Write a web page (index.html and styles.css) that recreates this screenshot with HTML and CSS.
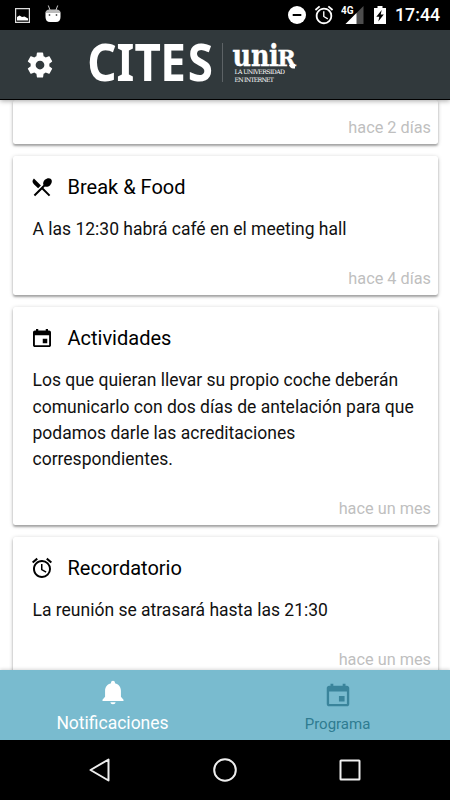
FILE: index.html
```html
<!DOCTYPE html>
<html lang="es">
<head>
<meta charset="utf-8">
<title>CITES - Notificaciones</title>
<meta name="viewport" content="width=device-width">
<link rel="stylesheet" href="styles.css">
</head>
<body>
<svg class="defs">
  <symbol id="calendar" viewBox="0 0 512 512"><path d="M368 272h-96v96h96v-96zM336 64v32H176V64h-48v32h-24c-22 0-40 18-40 40v272c0 22 18 40 40 40h304c22 0 40-18 40-40V136c0-22-18-40-40-40h-24V64h-48zm72 344H104V196h304v212z"/></symbol>
  <symbol id="alarm" viewBox="0 0 24 24"><path d="M22 5.720l-4.600-3.860-1.290 1.530 4.600 3.860L22 5.720zM7.880 3.390L6.600 1.860 2 5.710l1.290 1.530 4.590-3.850zM12.500 8H11v6l4.750 2.850.75-1.230-4-2.370V8zM12 4c-4.970 0-9 4.030-9 9s4.020 9 9 9a9 9 0 0 0 0-18zm0 16c-3.870 0-7-3.130-7-7s3.130-7 7-7 7 3.130 7 7-3.130 7-7 7z"/></symbol>
</svg>

<div class="status">
  <svg class="picture" viewBox="0 0 15 15"><path fill="none" stroke="#ddd" stroke-width="1.200" d="M.6.6h13.800v13.800H.6z"/><path d="M2 12.500V9l2.500-1.500L7 9l2.500-.5 3.500 2v2z"/></svg>
  <svg class="droid" viewBox="0 0 16 18"><path d="M.5 7.500h15V12c0 3-1.500 5-4.500 5H5c-3 0-4.500-2-4.500-5z"/><path fill="#bbb" d="M.5 8c0-2 1.500-3.500 4-3.500h7c2.500 0 4 1.500 4 3.500z"/><path fill="none" stroke="#ccc" d="M5 5L3.300.5M11 5L12.700.5"/><circle cx="4.500" cy="10" r=".9" fill="#555"/><circle cx="11.500" cy="10" r=".9" fill="#555"/></svg>
  <svg class="dnd" viewBox="0 0 18 18"><circle cx="9" cy="9" r="9"/><path fill="#000" d="M4.700 8h8.600v2H4.700z"/></svg>
  <svg class="alarm"><use href="#alarm"/></svg>
  <svg class="signal" viewBox="0 0 24 20"><path fill="#4d4d4d" d="M22.500 1v18h-18z"/><path d="M15.500 8v11h-11z"/><text x="0" y="9">4G</text></svg>
  <svg class="battery" viewBox="0 0 12 18"><path d="M3.500 0h5v2H12v16H0V2h3.500z"/><path fill="#000" d="M7.700 4L2.300 10.800h3l-1 4.700 5.500-7H6.700z"/></svg>
  <span class="time">17:44</span>
</div>

<header class="header">
  <svg class="gear" viewBox="0 0 24 24"><path d="M19.430 12.980c.04-.32.07-.64.07-.98s-.03-.66-.07-.98l2.110-1.650c.19-.15.24-.42.12-.64l-2-3.460c-.12-.22-.39-.3-.61-.22l-2.490 1c-.52-.4-1.080-.73-1.690-.98l-.38-2.650C14.460 2.180 14.250 2 14 2h-4c-.25 0-.46.18-.49.42l-.38 2.650c-.61.25-1.170.59-1.690.98l-2.490-1c-.23-.09-.49 0-.61.22l-2 3.460c-.13.22-.07.49.12.64l2.110 1.650c-.04.32-.07.65-.07.98s.03.66.07.98l-2.110 1.650c-.19.15-.24.42-.12.64l2 3.460c.12.22.39.3.61.22l2.490-1c.52.4 1.080.73 1.690.98l.38 2.650c.03.24.24.42.49.42h4c.25 0 .46-.18.49-.42l.38-2.650c.61-.25 1.170-.59 1.690-.98l2.490 1c.23.09.49 0 .61-.22l2-3.460c.12-.22.07-.49-.12-.64l-2.110-1.650zM12 15.500c-1.930 0-3.500-1.570-3.500-3.500s1.570-3.500 3.500-3.500 3.500 1.570 3.500 3.500-1.570 3.500-3.500 3.500z"/></svg>
  <svg class="logo" viewBox="0 0 214 50">
    <g class="cites" transform="scale(.88 1)">
      <text x="1.500 34.700 55.200 84.500 115.500" y="43.500">CITES</text>
    </g>
    <path fill="#5d6366" d="M136 6h1v39h-1z"/>
    <g class="unir" transform="scale(.88 1)">
      <text x="166.500 187.500 208" y="29">uni</text>
    </g>
    <g class="unir">
      <text class="cap" x="191.500" y="29">R</text>
    </g>
    <path d="M205 26.500l4 .5v4.500h-2c-2 0-3-1.500-4-3z"/>
    <text class="motto" x="148.500" y="37.200" textLength="50.500">LA UNIVERSIDAD</text>
    <text class="motto" x="148.500" y="44.500" textLength="39.500">EN INTERNET</text>
  </svg>
</header>

<main class="list">
  <article class="card first">
    <time>hace 2 días</time>
  </article>
  <article class="card">
    <h2><svg viewBox="0 0 24 24"><path d="M8.100 13.340l2.830-2.830L3.910 3.500a4.008 4.008 0 0 0 0 5.660l4.190 4.180zm6.780-1.810c1.530.71 3.680.21 5.270-1.380 1.910-1.910 2.280-4.650.81-6.120-1.460-1.460-4.200-1.100-6.120.81-1.590 1.590-2.090 3.740-1.380 5.270L3.700 19.870l1.410 1.410L12 14.410l6.880 6.880 1.410-1.410L13.410 13l1.470-1.470z"/></svg>Break &amp; Food</h2>
    <p>A las 12:30 habrá café en el meeting hall</p>
    <time>hace 4 días</time>
  </article>
  <article class="card">
    <h2><svg><use href="#calendar"/></svg>Actividades</h2>
    <p>Los que quieran llevar su propio coche deberán comunicarlo con dos días de antelación para que podamos darle las acreditaciones correspondientes.</p>
    <time>hace un mes</time>
  </article>
  <article class="card">
    <h2><svg><use href="#alarm"/></svg>Recordatorio</h2>
    <p>La reunión se atrasará hasta las 21:30</p>
    <time>hace un mes</time>
  </article>
</main>

<nav class="tabs">
  <a class="tab active">
    <svg viewBox="0 0 24 24"><path d="M12 22.500c1.300 0 2.200-.6 2.200-1.700H9.800c0 1.100.9 1.700 2.200 1.700zm6.800-6.500v-5c0-3.500-1.900-5.900-5.100-6.600V4c0-1-.7-1.700-1.700-1.700s-1.700.7-1.700 1.700v.4C7.100 5.100 5.200 7.500 5.200 11v5L3 18.700v1h18v-1L18.800 16z"/></svg>
    <span>Notificaciones</span>
  </a>
  <a class="tab">
    <svg><use href="#calendar"/></svg>
    <span>Programa</span>
  </a>
</nav>

<div class="softkeys">
  <svg viewBox="0 0 26 26"><path d="M21.500 2.500v21L3.500 13z"/></svg>
  <svg viewBox="0 0 26 26"><circle cx="13" cy="13" r="10.800"/></svg>
  <svg viewBox="0 0 26 26"><rect x="3.500" y="3.500" width="19" height="19" rx=".5"/></svg>
</div>
</body>
</html>
```

FILE: styles.css
```css
* {
  box-sizing: border-box;
}
body {
  margin: 0;
  height: 800px;
  display: flex;
  flex-direction: column;
  overflow: hidden;
  background: #fff;
  font-family: Roboto, sans-serif;
}
svg {
  display: block;
  flex: none;
}
.defs {
  display: none;
}

/* android status bar */
.status {
  flex: none;
  display: flex;
  align-items: center;
  height: 30px;
  padding: 0 10px 0 15px;
  background: #000;
  color: #fff;
  fill: #fff;
}
.picture { width: 15px; height: 15px; }
.droid { width: 16px; height: 18px; margin: -3px auto 0 15px; }
.dnd { width: 18px; height: 18px; }
.alarm { width: 22px; height: 22px; margin-left: 7px; }
.signal { width: 24px; height: 20px; margin: 0 9px 0 6px; }
.signal text { font-size: 10px; font-weight: bold; stroke: #000; stroke-width: 2px; paint-order: stroke; }
.battery { width: 12px; height: 18px; }
.time {
  width: 45px;
  margin-left: 9px;
  font-size: 17.800px;
  font-weight: 500;
  line-height: 32px;
  text-align: right;
  white-space: nowrap;
}

.header {
  position: relative;
  flex: none;
  display: flex;
  height: 70px;
  padding: 7px 25px;
  background: #31393c;
  border-bottom: 1px solid #000;
  box-shadow: 0 1px 5px rgba(0, 0, 0, .35);
  fill: #fff;
}
.gear { width: 30px; height: 30px; margin-top: 13px; }
.logo { width: 214px; height: 50px; margin-left: 31px; overflow: visible; }
.cites text { font: bold 52px "Noto Sans", sans-serif; }
.unir text { font: bold 29px "DejaVu Serif", serif; stroke: #fff; stroke-width: .4px; }
.unir .cap { font-size: 22px; }
.motto { font: 6.200px "DejaVu Serif", serif; }

.list {
  flex: 1;
  min-height: 0;
  overflow: hidden;
  padding: 0 12.500px;
}
.card {
  display: flex;
  flex-direction: column;
  margin-bottom: 12.300px;
  background: #fff;
  border-radius: 2.500px;
  box-shadow: 0 2px 2px rgba(0, 0, 0, .25), 0 1px 4px rgba(0, 0, 0, .22);
}
.card.first {
  height: 44px;
  justify-content: flex-end;
}
.card h2 {
  display: flex;
  align-items: center;
  height: 24px;
  margin: 18.500px 0 0 17.500px;
  font-size: 20px;
  font-weight: 400;
}
.card h2 svg {
  width: 24px;
  height: 24px;
  margin-right: 13.500px;
}
.card p {
  margin: 17.400px 20px 0;
  font-size: 17.500px;
  line-height: 26.300px;
  color: #111;
}
.card time {
  margin: 24.100px 6.500px 4.500px 0;
  font-size: 16.300px;
  line-height: 24px;
  text-align: right;
  color: #bfbfbf;
}

.tabs {
  position: relative;
  flex: none;
  display: flex;
  height: 70px;
  background: #79bbcf;
  box-shadow: 0 -1px 3px rgba(0, 0, 0, .15);
}
.tab {
  flex: 1;
  display: flex;
  flex-direction: column;
  align-items: center;
  padding-top: 10px;
  color: #2f7c91;
  fill: #3a849b;
  font-size: 15px;
}
.tab svg { width: 30px; height: 30px; }
.tab span { margin-top: 4px; line-height: 20px; }
.tab.active {
  padding-top: 8px;
  color: #fff;
  fill: #fff;
  font-size: 17.500px;
}
.tab.active svg { width: 28px; height: 28px; }
.tab.active span { margin-top: 7px; }

.softkeys {
  flex: none;
  display: flex;
  justify-content: space-between;
  height: 60px;
  padding: 17px 87px;
  background: #000;
}
.softkeys svg {
  width: 26px;
  height: 26px;
  fill: none;
  stroke: #eee;
  stroke-width: 2;
  stroke-linejoin: round;
}
```
